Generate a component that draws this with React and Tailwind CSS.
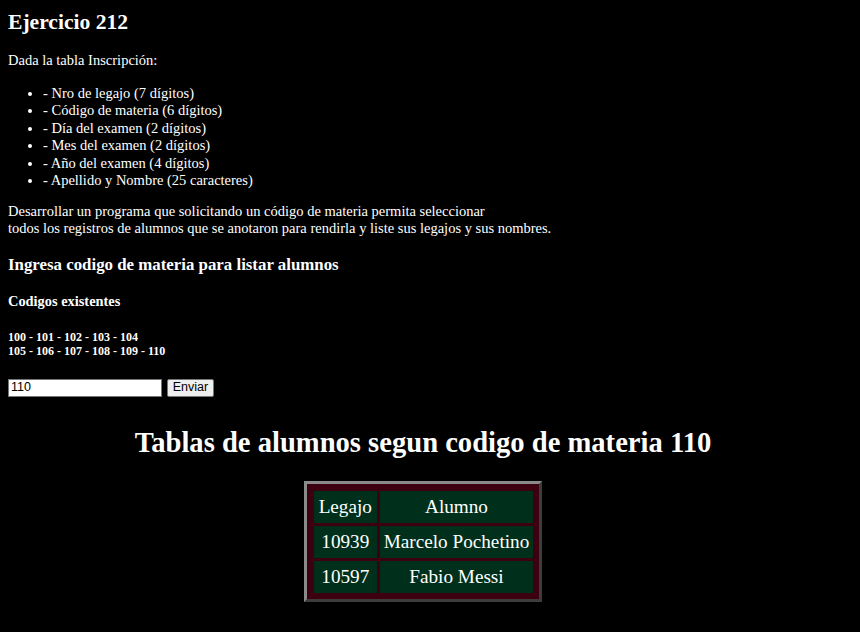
const campos = [
  '- Nro de legajo (7 dígitos)',
  '- Código de materia (6 dígitos)',
  '- Día del examen (2 dígitos)',
  '- Mes del examen (2 dígitos)',
  '- Año del examen (4 dígitos)',
  '- Apellido y Nombre (25 caracteres)',
];

const alumnos = [
  { legajo: '10939', nombre: 'Marcelo Pochetino' },
  { legajo: '10597', nombre: 'Fabio Messi' },
];

export default function App() {
  return (
    <div className="min-h-[632px] w-full bg-black text-white font-['Liberation_Serif',serif]">
      <div className="pl-[8px] pr-[22px] pt-[10px] pb-[20px]">
        <h2 className="text-[21.6px] font-bold leading-[24px]">Ejercicio 212</h2>

        <p className="mt-[17.6px] text-[14.5px] leading-[17px]">Dada la tabla Inscripción:</p>

        <ul className="mt-[16.4px] list-disc pl-[35px] text-[14.5px] leading-[17.4px]">
          {campos.map((c) => (
            <li key={c}>{c}</li>
          ))}
        </ul>

        <p className="mt-[13.6px] text-[14.5px] leading-[17px]">
          Desarrollar un programa que solicitando un código de materia permita seleccionar
          <br />
          todos los registros de alumnos que se anotaron para rendirla y liste sus legajos y sus nombres.
        </p>

        <h3 className="mt-[17.6px] text-[16.85px] font-bold leading-[19.4px]">
          Ingresa codigo de materia para listar alumnos
        </h3>

        <h4 className="mt-[18.6px] text-[14.4px] font-bold leading-[16.6px]">Codigos existentes</h4>

        <h5 className="mt-[21px] text-[12px] font-bold leading-[14px]">
          100 - 101 - 102 - 103 - 104
          <br />
          105 - 106 - 107 - 108 - 109 - 110
        </h5>

        <form className="mt-[20.5px] flex items-center gap-[5px]" onSubmit={(e) => e.preventDefault()}>
          <input
            type="text"
            defaultValue="110"
            className="h-[18px] w-[154px] border border-[#767676] bg-white px-[2px] text-[12.5px] text-black font-['Liberation_Sans',sans-serif] outline-none"
          />
          <button
            type="submit"
            className="h-[18px] w-[47px] rounded-[2px] border border-[#767676] bg-[#efefef] text-[12.5px] text-black font-['Liberation_Sans',sans-serif] leading-none"
          >
            Enviar
          </button>
        </form>

        <h1 className="mt-[29px] text-center text-[28.6px] font-bold leading-[33px]">
          Tablas de alumnos segun codigo de materia 110
        </h1>

        <div className="mt-[22px] flex justify-center">
          <div className="border-[3px] border-t-[#8a8a8a] border-l-[#8a8a8a] border-b-[#3c3c3c] border-r-[#3c3c3c] bg-[#3d0011] pt-[4px] pl-[4px] pr-[3px] pb-[3px]">
            <table className="border-separate border-spacing-[3px] whitespace-nowrap text-[19.2px] leading-[22px]">
              <thead>
                <tr>
                  <th className="w-[63px] bg-[#00301c] px-[4px] py-[5px] font-normal">Legajo</th>
                  <th className="w-[153px] bg-[#00301c] px-[4px] py-[5px] font-normal">Alumno</th>
                </tr>
              </thead>
              <tbody>
                {alumnos.map((a) => (
                  <tr key={a.legajo}>
                    <td className="bg-[#00301c] px-[4px] py-[5px] text-center">{a.legajo}</td>
                    <td className="bg-[#00301c] px-[4px] py-[5px] text-center">{a.nombre}</td>
                  </tr>
                ))}
              </tbody>
            </table>
          </div>
        </div>
      </div>
    </div>
  );
}
